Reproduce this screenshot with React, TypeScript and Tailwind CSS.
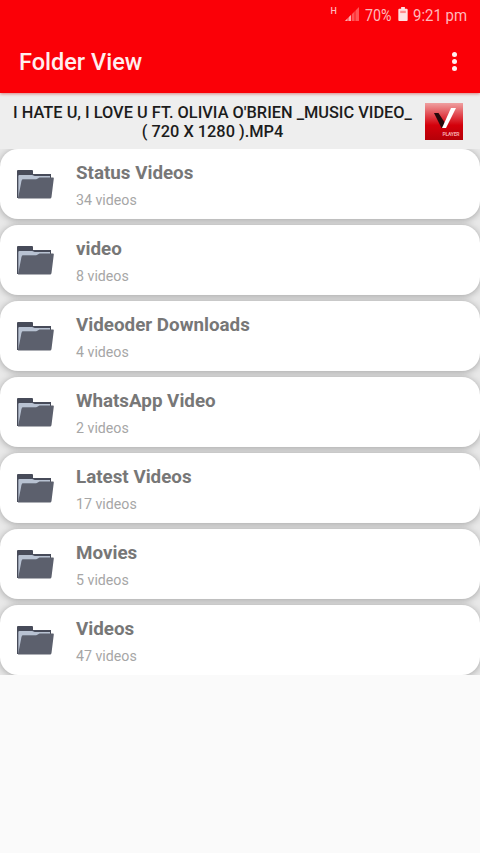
const folders = [
  { name: 'Status Videos', count: 34 },
  { name: 'video', count: 8 },
  { name: 'Videoder Downloads', count: 4 },
  { name: 'WhatsApp Video', count: 2 },
  { name: 'Latest Videos', count: 17 },
  { name: 'Movies', count: 5 },
  { name: 'Videos', count: 47 },
];

function StatusBar() {
  return (
    <div className="flex h-[30px] items-center justify-end pr-[13px] text-[17px] leading-[30px] text-[#ffb9bb]">
      <span className="mr-[8px] -mt-[8px] text-[9px] leading-none font-medium">H</span>
      <svg className="mr-[6px] -mt-[3px] h-[14px] w-[14px]" viewBox="0 0 14 14">
        <path d="M0 14 14 0V14Z" fill="#ff5557" />
        <path d="M0 14 6 8V14Z" fill="#ffaaac" />
        <path d="M3 9V14M6.5 6V14M10 3V14" stroke="#f90008" strokeWidth="0.7" />
      </svg>
      <span className="mr-[5px] w-[28px] whitespace-nowrap">
        <span className="inline-block origin-left scale-x-[0.84]">70%</span>
      </span>
      <svg className="mr-[5px] -mt-[3px] h-[14px] w-[10px]" viewBox="0 0 10 15">
        <path d="M3 0H7V2H9Q10 2 10 3V14Q10 15 9 15H1Q0 15 0 14V3Q0 2 1 2H3Z" fill="#ffe1e1" />
        <path d="M2 4H8V6.500H2Z" fill="#ff8a8c" />
      </svg>
      <span className="w-[54px] whitespace-nowrap">
        <span className="inline-block origin-left scale-x-[0.88]">9:21 pm</span>
      </span>
    </div>
  );
}

function FolderIcon() {
  return (
    <svg className="h-[29px] w-[37px]" viewBox="0 0 37 29">
      <path d="M0 1Q0 0 1 0H15Q16 0 16 1V4H34V28H0Z" fill="#474b59" />
      <path d="M1.500 6Q1.500 5 2.500 5H15L18 6H33V28H1.500Z" fill="#8f98a8" />
      <path d="M1.500 6Q1.500 5 2.500 5H15L17 6H33V9H5L3 27H1.500Z" fill="#b8c2d2" />
      <path d="M4.500 11Q4.700 9.500 6 9.500H19L22.500 7.500H36Q37 7.500 36.800 8.500L34.500 27Q34.300 28.500 33 28.500H1Z" fill="#5c606d" />
    </svg>
  );
}

function PlayerLogo() {
  return (
    <svg className="h-[37px] w-[38px]" viewBox="0 0 38 37">
      <defs>
        <linearGradient id="logoRed" x1="0" y1="0" x2="0" y2="1">
          <stop offset="0" stopColor="#efa0a0" />
          <stop offset="0.35" stopColor="#e04048" />
          <stop offset="0.6" stopColor="#d4000b" />
          <stop offset="1" stopColor="#b50008" />
        </linearGradient>
      </defs>
      <rect width="38" height="37" fill="url(#logoRed)" />
      <path d="M9 10H13.500L20 20L18 25H16.500Z" fill="#26090b" />
      <path d="M26 5H31L21 25H17Z" fill="#fff" />
      <text x="17.500" y="32.500" fontSize="5" fontWeight="700" textLength="17" fill="#f5a5a8" fontFamily="Roboto, sans-serif">
        PLAYER
      </text>
    </svg>
  );
}

function App() {
  return (
    <main className="h-[853px] w-[480px] overflow-hidden bg-[#fafafa] font-[Roboto,sans-serif]">
      <header className="relative h-[93px] bg-[#fb0007] shadow-[0_1px_3px_rgba(190,0,0,0.45)]">
        <StatusBar />
        <div className="flex h-[63px] items-center justify-between pr-[23px] pl-[19px]">
          <h1 className="pt-[2px] text-[23.500px] leading-none font-medium text-[#ffeeee]">Folder View</h1>
          <button aria-label="More options" className="-mt-px flex flex-col gap-[2px]">
            <span className="size-[5px] rounded-full bg-[#ffeeee]" />
            <span className="size-[5px] rounded-full bg-[#ffeeee]" />
            <span className="size-[5px] rounded-full bg-[#ffeeee]" />
          </button>
        </div>
      </header>

      <div className="flex h-[56px] bg-[#eeeeee] pt-[10px]">
        <p className="w-[425px] text-center text-[16.350px] leading-[19px] font-medium text-[#1c1c1c]">
          I HATE U, I LOVE U FT. OLIVIA O'BRIEN _MUSIC VIDEO_
          <br />( 720 X 1280 ).MP4
        </p>
        <PlayerLogo />
      </div>

      <ul className="flex h-[526px] flex-col gap-[6px] overflow-hidden bg-[#e8e8e8]">
        {folders.map((folder) => (
          <li
            key={folder.name}
            className="flex h-[70px] shrink-0 rounded-[18px] bg-white pl-[17px] shadow-[0_1px_7px_rgba(0,0,0,0.3)]"
          >
            <div className="w-[59px] pt-[21px]">
              <FolderIcon />
            </div>
            <div className="pt-[13px]">
              <h2 className="text-[18.800px] leading-[22px] font-bold text-[#777777]">{folder.name}</h2>
              <p className="mt-[8px] text-[14.200px] leading-[17px] text-[#a6a6a6]">{folder.count} videos</p>
            </div>
          </li>
        ))}
      </ul>
    </main>
  );
}

export default App;
